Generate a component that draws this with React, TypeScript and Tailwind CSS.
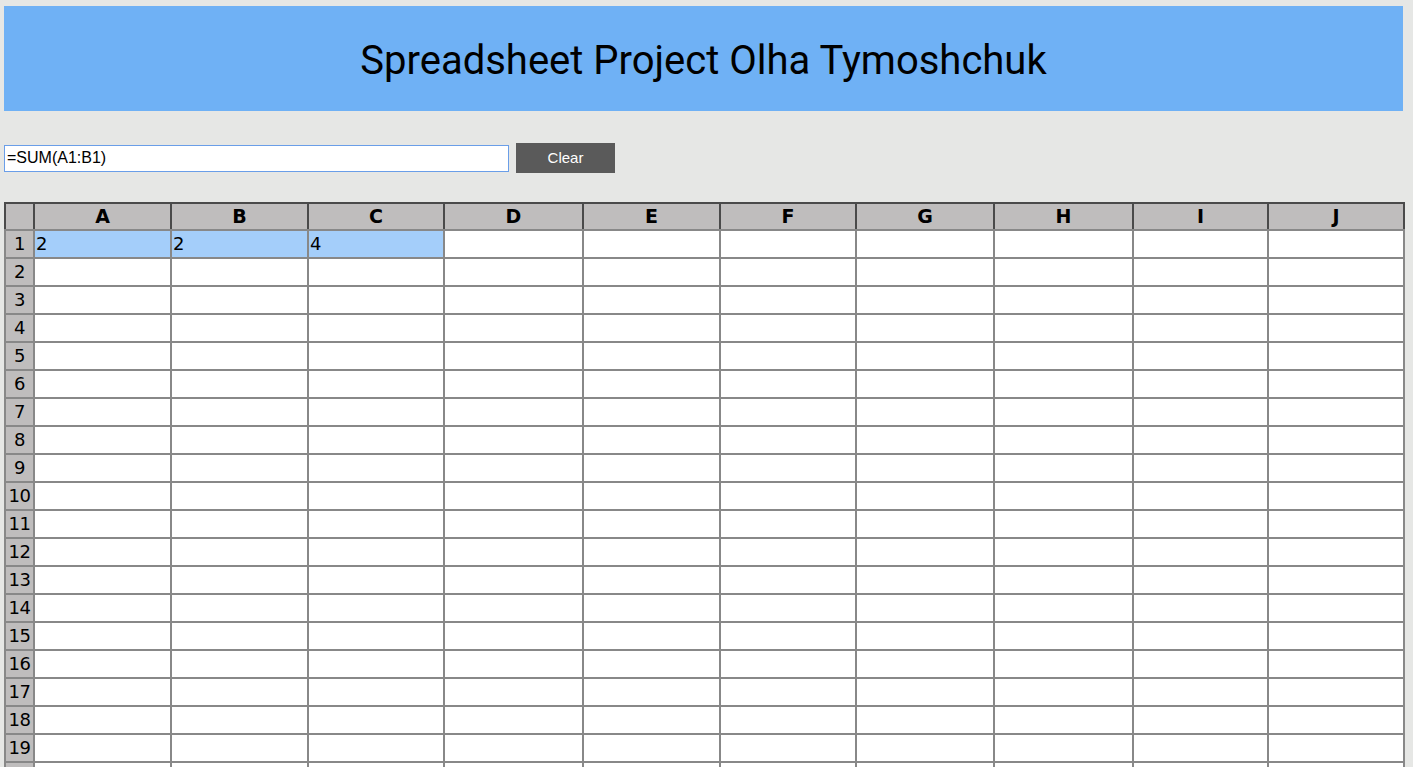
import { useState } from "react";

const cols = ["A", "B", "C", "D", "E", "F", "G", "H", "I", "J"];
const widths = [137, 137, 136, 139, 137, 136, 138, 139, 135, 136];
const rows = Array.from({ length: 20 }, (_, i) => i + 1);

const initial: Record<string, string> = { A1: "2", B1: "2", C1: "4" };
const selected = ["A1", "B1", "C1"];

export default function App() {
  const [formula, setFormula] = useState("=SUM(A1:B1)");
  const [cells, setCells] = useState(initial);

  return (
    <div className="h-[767px] overflow-hidden bg-[#e6e7e5] pl-[4px] pr-[10px] pt-[6px]">
      <header className="h-[105px] bg-[#6fb1f5] flex items-center justify-center">
        <h1 className="font-['Roboto',sans-serif] text-[40px] leading-none text-black pt-[4px]">
          Spreadsheet Project Olha Tymoshchuk
        </h1>
      </header>

      <div className="flex items-center gap-[7px] mt-[32px]">
        <input
          className="w-[505px] h-[27px] bg-white border border-[#6a9ee8] px-[2px] font-['Liberation_Sans',Arial,sans-serif] text-[16px] text-black outline-none"
          value={formula}
          onChange={(e) => setFormula(e.target.value)}
        />
        <button
          className="w-[99px] h-[30px] bg-[#5a5a5a] text-white font-['Liberation_Sans',Arial,sans-serif] text-[15px]"
          onClick={() => {
            setFormula("");
            setCells({});
          }}
        >
          Clear
        </button>
      </div>

      <table className="mt-[29px] w-[1399px] table-fixed border-collapse border-2 border-[#4a4a4a] font-['DejaVu_Sans',Verdana,sans-serif] text-[18px] text-black">
        <colgroup>
          <col className="w-[29px]" />
          {widths.map((w, i) => (
            <col key={i} style={{ width: w }} />
          ))}
        </colgroup>
        <thead>
          <tr className="h-[27px]">
            <th className="bg-[#bfbdbd] border-2 border-[#4a4a4a] border-b-[#888]"></th>
            {cols.map((c) => (
              <th key={c} className="bg-[#bfbdbd] border-2 border-[#4a4a4a] border-b-[#888] font-bold text-[19px] text-center p-0 leading-none">
                {c}
              </th>
            ))}
          </tr>
        </thead>
        <tbody>
          {rows.map((r) => (
            <tr key={r} className="h-[28px]">
              <td className="bg-[#bfbdbd] border-2 border-[#888] text-center p-0 leading-none tracking-[-0.5px]">
                {r < 20 ? r : ""}
              </td>
              {cols.map((c) => {
                const id = c + r;
                return (
                  <td
                    key={id}
                    className={
                      "border-2 border-[#888] p-0 pl-[1px] leading-none whitespace-nowrap overflow-hidden " +
                      (selected.includes(id) ? "bg-[#a4cefa]" : "bg-white")
                    }
                  >
                    {cells[id] ?? ""}
                  </td>
                );
              })}
            </tr>
          ))}
        </tbody>
      </table>
    </div>
  );
}
